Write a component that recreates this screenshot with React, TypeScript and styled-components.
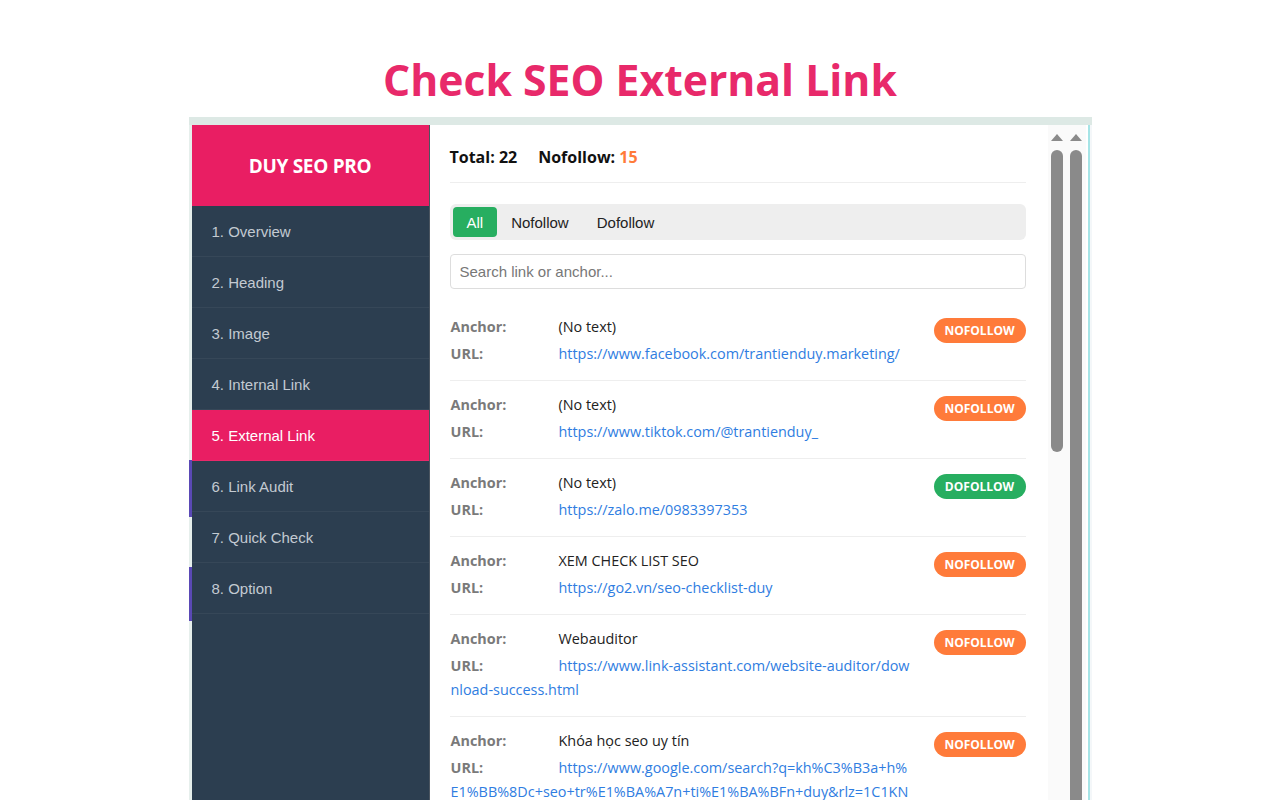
import React, { useState } from 'react';
import styled, { createGlobalStyle } from 'styled-components';

const GlobalStyle = createGlobalStyle`
  html, body {
    margin: 0;
    padding: 0;
    background: #ffffff;
    overflow: hidden;
  }
  * {
    box-sizing: border-box;
  }
`;

const Page = styled.div`
  display: flex;
  flex-direction: column;
  align-items: center;
  height: 800px;
  overflow: hidden;
  font-family: 'Open Sans', 'Liberation Sans', sans-serif;
`;

const Title = styled.h1`
  flex: none;
  margin: 55px 0 0;
  height: 62px;
  font-family: 'Open Sans', sans-serif;
  font-size: 42.7px;
  line-height: 50px;
  font-weight: 700;
  color: #e8296a;
`;

const Frame = styled.div`
  flex: none;
  width: 903px;
  display: flex;
  flex-direction: column;
  background: #fff;
`;

const TopStrip = styled.div`
  height: 8px;
  background: #dde9e5;
`;

const Body = styled.div`
  display: flex;
  height: 700px;
`;

const LeftEdge = styled.div`
  width: 3px;
  background: linear-gradient(
    to bottom,
    #e6efec 0,
    #e6efec 335px,
    #5a49b5 335px,
    #5a49b5 392px,
    #e6efec 392px,
    #e6efec 442px,
    #5a49b5 442px,
    #5a49b5 496px,
    #e6efec 496px
  );
`;

const Sidebar = styled.nav`
  width: 238px;
  flex: none;
  background: #2c3e50;
  border-right: 1px solid #4b5560;
  display: flex;
  flex-direction: column;
`;

const Brand = styled.div`
  height: 81px;
  display: flex;
  align-items: center;
  justify-content: center;
  background: #e91e63;
  color: #fff;
  font-family: 'Open Sans', sans-serif;
  font-weight: 700;
  font-size: 19px;
  letter-spacing: -0.3px;
`;

const MenuItem = styled.div<{ $active?: boolean }>`
  height: 51px;
  display: flex;
  align-items: center;
  padding-left: 20px;
  border-bottom: 1px solid rgba(255, 255, 255, 0.05);
  font-family: 'Liberation Sans', Arial, sans-serif;
  font-size: 15px;
  color: ${(p) => (p.$active ? '#ffffff' : '#c3cad2')};
  background: ${(p) => (p.$active ? '#e91e63' : 'transparent')};
  cursor: pointer;
`;

const Main = styled.main`
  width: 618px;
  flex: none;
  padding: 21px 22px 0 20px;
  background: #fff;
  overflow: hidden;
`;

const Stats = styled.div`
  display: flex;
  gap: 21px;
  padding-bottom: 14px;
  border-bottom: 1px solid #eeeeee;
  font-size: 16px;
  line-height: 22px;
  font-weight: 700;
  color: #111;
`;

const Count = styled.span<{ $warn?: boolean }>`
  color: ${(p) => (p.$warn ? '#ff7b3a' : '#111')};
`;

const Tabs = styled.div`
  margin-top: 21px;
  height: 36px;
  padding: 3px;
  display: flex;
  background: #eeeeee;
  border-radius: 6px;
`;

const Tab = styled.button<{ $active?: boolean }>`
  height: 30px;
  padding: 0 14px;
  border: none;
  border-radius: 4px;
  font-family: 'Liberation Sans', Arial, sans-serif;
  font-size: 15px;
  color: ${(p) => (p.$active ? '#fff' : '#222')};
  background: ${(p) => (p.$active ? '#27ae60' : 'transparent')};
  cursor: pointer;
`;

const Search = styled.input`
  margin-top: 14px;
  width: 100%;
  height: 35px;
  padding: 0 9px;
  border: 1px solid #dddddd;
  border-radius: 4px;
  font-family: 'Liberation Sans', Arial, sans-serif;
  font-size: 15px;
  outline: none;
  &::placeholder {
    color: #777;
  }
`;

const List = styled.div`
  margin-top: 14px;
`;

const Row = styled.div`
  display: flex;
  align-items: flex-start;
  padding: 12px 0 14px;
  border-bottom: 1px solid #eeeeee;
`;

const Info = styled.div`
  flex: 1;
  min-width: 0;
  padding-left: 1px;
`;

const Line = styled.div`
  font-size: 14.4px;
  line-height: 24px;
  color: #222;
  word-break: break-all;
  & + & {
    margin-top: 3px;
  }
`;

const Label = styled.span`
  display: inline-block;
  width: 108px;
  font-weight: 700;
  color: #7a7a7a;
`;

const Url = styled.a`
  color: #2f7de1;
  text-decoration: none;
`;

const Badge = styled.span<{ $follow: 'nofollow' | 'dofollow' }>`
  flex: none;
  margin: 3px 0 0 20px;
  width: 92px;
  height: 25px;
  display: flex;
  align-items: center;
  justify-content: center;
  border-radius: 13px;
  font-size: 12px;
  font-weight: 700;
  color: #fff;
  background: ${(p) => (p.$follow === 'nofollow' ? '#ff7b3a' : '#27ae60')};
`;

const ScrollTrack = styled.div<{ $w: number; $thumbH: number }>`
  width: ${(p) => p.$w}px;
  flex: none;
  background: #fafafa;
  display: flex;
  flex-direction: column;
  align-items: center;
  padding-top: 9px;
  &::before {
    content: '';
    width: 0;
    height: 0;
    border-left: 6px solid transparent;
    border-right: 6px solid transparent;
    border-bottom: 7px solid #8a8a8a;
  }
  &::after {
    content: '';
    margin-top: 9px;
    width: 12px;
    height: ${(p) => p.$thumbH}px;
    border-radius: 6px;
    background: #8a8a8a;
  }
`;

const RightEdge = styled.div`
  width: 6px;
  flex: none;
  background: linear-gradient(
    to right,
    #fff 0,
    #fff 2px,
    #a6e4e6 2px,
    #a6e4e6 4px,
    #f4f7f9 4px
  );
`;

const menu = [
  '1. Overview',
  '2. Heading',
  '3. Image',
  '4. Internal Link',
  '5. External Link',
  '6. Link Audit',
  '7. Quick Check',
  '8. Option',
];

type LinkItem = { anchor: string; url: string; follow: 'nofollow' | 'dofollow' };

const links: LinkItem[] = [
  { anchor: '(No text)', url: 'https://www.facebook.com/trantienduy.marketing/', follow: 'nofollow' },
  { anchor: '(No text)', url: 'https://www.tiktok.com/@trantienduy_', follow: 'nofollow' },
  { anchor: '(No text)', url: 'https://zalo.me/0983397353', follow: 'dofollow' },
  { anchor: 'XEM CHECK LIST SEO', url: 'https://go2.vn/seo-checklist-duy', follow: 'nofollow' },
  {
    anchor: 'Webauditor',
    url: 'https://www.link-assistant.com/website-auditor/download-success.html',
    follow: 'nofollow',
  },
  {
    anchor: 'Khóa học seo uy tín',
    url: 'https://www.google.com/search?q=kh%C3%B3a+h%E1%BB%8Dc+seo+tr%E1%BA%A7n+ti%E1%BA%BFn+duy&rlz=1C1KNTJ_enVN1062VN1062',
    follow: 'nofollow',
  },
];

export default function App() {
  const [tab, setTab] = useState('All');

  return (
    <Page>
      <GlobalStyle />
      <Title>Check SEO External Link</Title>
      <Frame>
        <TopStrip />
        <Body>
          <LeftEdge />
          <Sidebar>
            <Brand>DUY SEO PRO</Brand>
            {menu.map((m) => (
              <MenuItem key={m} $active={m === '5. External Link'}>
                {m}
              </MenuItem>
            ))}
          </Sidebar>
          <Main>
            <Stats>
              <span>
                Total: <Count>22</Count>
              </span>
              <span>
                Nofollow: <Count $warn>15</Count>
              </span>
            </Stats>
            <Tabs>
              {['All', 'Nofollow', 'Dofollow'].map((t) => (
                <Tab key={t} $active={tab === t} onClick={() => setTab(t)}>
                  {t}
                </Tab>
              ))}
            </Tabs>
            <Search placeholder="Search link or anchor..." />
            <List>
              {links.map((l, i) => (
                <Row key={i}>
                  <Info>
                    <Line>
                      <Label>Anchor:</Label>
                      {l.anchor}
                    </Line>
                    <Line>
                      <Label>URL:</Label>
                      <Url href="#">{l.url}</Url>
                    </Line>
                  </Info>
                  <Badge $follow={l.follow}>{l.follow.toUpperCase()}</Badge>
                </Row>
              ))}
            </List>
          </Main>
          <ScrollTrack $w={18} $thumbH={302} />
          <ScrollTrack $w={20} $thumbH={700} />
          <RightEdge />
        </Body>
      </Frame>
    </Page>
  );
}
